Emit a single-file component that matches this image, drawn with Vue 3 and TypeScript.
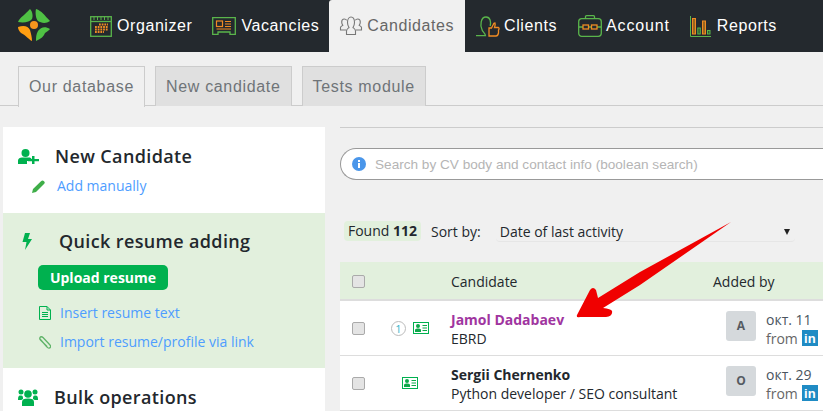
<script setup lang="ts">
interface Candidate {
  name: string
  role: string
  initial: string
  date: string
  visited: boolean
  badge: string
}
const candidates: Candidate[] = [
  { name: 'Jamol Dadabaev', role: 'EBRD', initial: 'A', date: 'окт. 11', visited: true, badge: '1' },
  { name: 'Sergii Chernenko', role: 'Python developer / SEO consultant', initial: 'O', date: 'окт. 29', visited: false, badge: '' }
]
</script>

<template>
  <div class="page">
    <header class="nav">
      <svg class="logo" viewBox="0 0 32 32" width="32" height="32">
        <circle cx="16" cy="16" r="4" fill="#f7941d" />
        <path d="M0 13C2 8 7 6 12 0 15 3 15 8 14 10 12 13 6 14 0 13Z" fill="#4fc144" />
        <path d="M18 0C24 2 26 6 32 12 28 15 23 14 20 12 18 10 17 4 18 0Z" fill="#4fc144" />
        <path d="M0 18C6 16 10 17 12 21 13 25 14 28 14 32 11 31 8 26 3 24 1 22 0 20 0 18Z" fill="#ff9e12" />
        <path d="M32 20C27 17 23 18 20 22 18 25 18 29 18 32 23 30 26 27 27 24 29 23 31 21 32 20Z" fill="#4fc144" />
      </svg>
      <nav class="nav-items">
        <a class="nav-item organizer">
          <svg viewBox="0 0 22 21" width="22" height="21" fill="none">
            <rect x="0.7" y="0.7" width="20.6" height="19.6" stroke="#5ab54b" stroke-width="1.3" />
            <path d="M1 5.500H21" stroke="#5ab54b" stroke-width="1.3" />
            <path d="M4 1V4M7.500 1V4M11 1V4M14.500 1V4M18 1V4" stroke="#5ab54b" />
            <path d="M9 8.500H18M5 11H18M5 13.500H18M5 16H14" stroke="#ef8b23" stroke-width="1.8" stroke-dasharray="1.800 .9" />
          </svg>
          Organizer
        </a>
        <a class="nav-item vacancies">
          <svg viewBox="0 0 24 19" width="24" height="19" fill="none">
            <path d="M.7.7H23.300V17.300H18V15H6V17.300H.7Z" stroke="#5ab54b" stroke-width="1.3" />
            <rect x="4.500" y="4" width="6" height="5.500" stroke="#ef8b23" stroke-width="1.2" />
            <path d="M13 4.500H19M13 7H19M13 9.500H19M4.500 12H19" stroke="#ef8b23" />
          </svg>
          Vacancies
        </a>
        <a class="nav-item active">
          <svg viewBox="0 0 24 20" width="24" height="20" fill="none" stroke="#777" stroke-width="1.1">
            <path d="M7.500 18.500V15C7.500 13 9.500 12 10 11.500 9 10 8.500 8.500 8.500 6.500 8.500 3 10 1 12 1S15.500 3 15.500 6.500C15.500 8.500 15 10 14 11.500 14.500 12 16.500 13 16.500 15V18.500Z" />
            <path d="M7 14H1.500V11.500C1.500 10.500 3 10 3.800 9.300 3 8.200 2.700 7 2.700 6 2.700 4 4 3 5.300 3 6.300 3 7.200 3.500 7.700 4.300" />
            <path d="M17 14H22.500V11.500C22.500 10.500 21 10 20.200 9.300 21 8.200 21.300 7 21.300 6 21.300 4 20 3 18.700 3 17.700 3 16.800 3.500 16.300 4.300" />
          </svg>
          Candidates
        </a>
        <a class="nav-item clients">
          <svg viewBox="0 0 24 21" width="24" height="21" fill="none">
            <path d="M0 19.700H9.500C9.500 17.500 6 15.500 6 13.500 4 10 4.500 1 10 1 14.500 1 15 6 14.200 10" stroke="#5ab54b" stroke-width="1.3" />
            <path d="M13 12H15.500L17 9C17.500 7.500 18 7 19 7 19.500 8 19 10 18.500 11.500H22.500C23.500 12 23 13.500 22.500 14V17C22 19.500 21.500 20 20 20H13Z" stroke="#ef8b23" stroke-width="1.3" />
          </svg>
          Clients
        </a>
        <a class="nav-item account">
          <svg viewBox="0 0 24 22" width="24" height="22" fill="none" stroke="#5ab54b" stroke-width="1.3">
            <rect x="0.7" y="3.700" width="22.600" height="17.600" rx="3" />
            <path d="M7.500 3.500V1.700C7.500 1 8 .7 8.500 .7H15.500C16 .7 16.500 1 16.500 1.700V3.500" />
            <path d="M1 12H5M10.500 12H13.500M19 12H23" />
            <rect x="5" y="10" width="5.500" height="4" stroke="#ef8b23" />
            <rect x="13.500" y="10" width="5.500" height="4" stroke="#ef8b23" />
          </svg>
          Account
        </a>
        <a class="nav-item reports">
          <svg viewBox="0 0 21 21" width="21" height="21" fill="none">
            <path d="M.5 0V20.500H21" stroke="#5ab54b" />
            <rect x="2.500" y="2.500" width="3" height="15.500" fill="#9a651f" stroke="#ef8b23" />
            <rect x="7.800" y="12" width="2.500" height="6" fill="#2d5a30" stroke="#5ab54b" />
            <rect x="12.500" y="5" width="3" height="13" fill="#9a651f" stroke="#ef8b23" />
            <rect x="17.500" y="14.500" width="2.500" height="3.500" fill="#2d5a30" stroke="#5ab54b" />
          </svg>
          Reports
        </a>
      </nav>
    </header>

    <div class="subtabs">
      <a class="subtab current">Our database</a>
      <a class="subtab">New candidate</a>
      <a class="subtab">Tests module</a>
    </div>

    <main class="main">
      <aside class="side">
        <section class="block new">
          <h2 class="title">
            <svg class="title-icon" viewBox="0 0 21 15" width="21" height="15" fill="#00b14f">
              <circle cx="7.500" cy="4" r="4" />
              <path d="M0 15V11.500C0 9.500 2 8.500 4 8.500H11C12.500 8.500 13 9 13.500 10H11V12H9V15Z" />
              <path d="M14 7H16.500V10H21V12.300H16.500V15.500H14V12.300H10V10H14Z" />
            </svg>
            <span>New Candidate</span>
          </h2>
          <a class="link manual">
            <svg viewBox="0 0 13 13" width="13" height="13" fill="#3fae49"><path d="M0 13 1 9 9 1.200C10 .2 11 .2 12 1.200S13 3 12 4L4 12Z" /></svg>
            Add manually
          </a>
        </section>
        <section class="block quick">
          <h2 class="title">
            <svg class="title-icon bolt" viewBox="0 0 10 17" width="10" height="17" fill="#00b14f"><path d="M3 0H8L6 6H10L3 17 4.500 9H0.500Z" /></svg>
            <span>Quick resume adding</span>
          </h2>
          <button class="upload">Upload resume</button>
          <a class="link resume">
            <svg viewBox="0 0 12 14" width="12" height="14" fill="none" stroke="#00b14f"><path d="M.5.5H8L11.500 4V13.500H.5ZM8 .5V4H11.500M3 6.500H9M3 8.500H9M3 10.500H9" /></svg>
            Insert resume text
          </a>
          <a class="link resume">
            <svg viewBox="0 0 12 13" width="12" height="13" fill="none" stroke="#5fb368" stroke-width="1.300"><path d="M1 3 8 11C9 12.500 11 12.500 11.500 11 12 10 11.500 9.500 11 9L4 1.500C3 .5 1.500 .5 1 1.500S.5 3 1.500 4L8 10.500" /></svg>
            Import resume/profile via link
          </a>
        </section>
        <section class="block bulk">
          <h2 class="title">
            <svg class="title-icon" viewBox="0 0 20 18" width="20" height="18" fill="#00b14f">
              <circle cx="3" cy="4" r="2.500" /><circle cx="17" cy="4" r="2.500" /><circle cx="10" cy="6" r="3.800" />
              <path d="M0 12C0 8 1 7.500 3 7.500 5 7.500 5 9 5 11 4 12 3 12 0 12ZM20 12C20 8 19 7.500 17 7.500 15 7.500 15 9 15 11 16 12 17 12 20 12ZM4 18V14C4 11.500 6 10.500 10 10.500S16 11.500 16 14V18Z" />
            </svg>
            <span>Bulk operations</span>
          </h2>
        </section>
      </aside>

      <section class="content">
        <div class="search">
          <svg viewBox="0 0 14 14" width="14" height="14">
            <circle cx="7" cy="7" r="7" fill="#4a96ea" />
            <rect x="6" y="6" width="2" height="5" fill="#fff" />
            <rect x="6" y="3" width="2" height="2" fill="#fff" />
          </svg>
          <span class="placeholder">Search by CV body and contact info (boolean search)</span>
        </div>
        <div class="filters">
          <span class="found">Found <b>112</b></span>
          <span class="sort-label">Sort by:</span>
          <div class="select">
            <span>Date of last activity</span>
            <i class="caret"></i>
          </div>
        </div>
        <div class="table">
          <div class="row head">
            <span class="cell-check"><i class="check"></i></span>
            <span class="cell-icons"></span>
            <span class="cell-main">Candidate</span>
            <span class="cell-added">Added by</span>
          </div>
          <div v-for="c in candidates" :key="c.name" class="row item">
            <span class="cell-check"><i class="check"></i></span>
            <span class="cell-icons">
              <i v-if="c.badge" class="count">{{ c.badge }}</i>
              <svg viewBox="0 0 16 12" width="16" height="12" fill="none">
                <rect x=".5" y=".5" width="15" height="11" stroke="#00b14f" />
                <circle cx="5" cy="4" r="2" fill="#0ea84a" />
                <path d="M2 10V8C2 7 3.500 6.500 5 6.500S8 7 8 8V10Z" fill="#0ea84a" />
                <path d="M9.500 3.500H14M9.500 6H14M9.500 8.500H14" stroke="#0ea84a" />
              </svg>
            </span>
            <span class="cell-main">
              <a class="name" :class="{ visited: c.visited }">{{ c.name }}</a>
              <span class="role">{{ c.role }}</span>
            </span>
            <span class="cell-added">
              <i class="avatar">{{ c.initial }}</i>
              <span class="meta">
                <span class="date">{{ c.date }}</span>
                <span class="from">from <i class="in">in</i></span>
              </span>
            </span>
          </div>
        </div>
      </section>
    </main>

    <svg class="arrow" viewBox="0 0 823 411" width="823" height="411">
      <path d="M731 222 L640 272 L598 298 L596 290 Q593 286 590 290 L577 315 Q576 318 580 317 L606 317 Q613 316 612 311 Q611 309 603 308 L640 285 Z" fill="#f00000" />
    </svg>
  </div>
</template>

<style>
html, body { margin: 0; overflow: hidden; background: #f0f0f0; }
</style>

<style scoped>
.page {
  position: relative;
  width: 823px;
  height: 411px;
  overflow: hidden;
  background: #f0f0f0;
  font-family: "Open Sans", sans-serif;
  color: #23282d;
}
a { text-decoration: none; }
i { font-style: normal; }
.nav {
  display: flex;
  height: 52px;
  background: #24292e;
}
.logo { margin: 9px 0 0 18px; flex: none; }
.nav-items { display: flex; margin-left: 30px; }
.nav-item {
  display: flex;
  align-items: center;
  gap: 5px;
  height: 52px;
  color: #fff;
  font: 16px "Liberation Sans", sans-serif;
  letter-spacing: 0.58px;
  padding: 0 10px;
  box-sizing: border-box;
}
.active {
  background: #f0f0f0;
  color: #666;
  gap: 4px;
  padding: 0 11px 0 10px;
  border-radius: 3px 0 0 0;
}
.clients { padding-left: 11px; gap: 4px; }
.account { padding-left: 11px; gap: 4px; letter-spacing: 0.85px; }
.reports { gap: 6px; }
.subtabs {
  display: flex;
  gap: 10px;
  height: 54px;
  box-sizing: border-box;
  padding: 14px 0 0 18px;
  border-bottom: 1px solid #ccc;
}
.subtab {
  height: 40px;
  box-sizing: border-box;
  padding: 0 10px;
  font: 16px/40px "Liberation Sans", sans-serif;
  letter-spacing: 0.67px;
  color: #6f7478;
  background: #e0e0e0;
  border: 1px solid #ccc;
  border-bottom: 0;
}
.current {
  height: 41px;
  background: #f0f0f0;
}
.main {
  display: flex;
  padding: 21px 0 0 3px;
}
.side { width: 322px; flex: none; }
.block { background: #fff; }
.new { height: 86px; padding: 18px 0 0 15px; box-sizing: border-box; }
.quick { height: 155px; background: #e2f0dd; padding: 17px 0 0 19px; box-sizing: border-box; }
.bulk { height: 60px; padding: 18px 0 0 15px; box-sizing: border-box; }
.title {
  display: flex;
  align-items: center;
  margin: 0;
  height: 22px;
  font: 600 18px/22px "Open Sans", sans-serif;
  letter-spacing: 0.37px;
  color: #23282d;
}
.title svg { flex: none; }
.new .title span { margin-left: 16px; }
.quick .title span { margin-left: 27px; }
.bulk .title span { margin-left: 16px; }
.link {
  display: flex;
  align-items: center;
  font-size: 14px;
  line-height: 20px;
  color: #4e9dff;
}
.manual { gap: 12px; margin: 9px 0 0 14px; }
.upload {
  display: block;
  width: 130px;
  height: 25px;
  margin: 13px 0 0 16px;
  padding: 0;
  border: 0;
  border-radius: 5px;
  background: #00b14f;
  color: #fff;
  font: 700 14px "Open Sans", sans-serif;
}
.resume { gap: 9px; margin: 13px 0 0 17px; }
.resume + .resume { margin-top: 9px; }
.content { flex: 1; margin-left: 15px; border-top: 1px solid #ccc; min-width: 0; }
.search {
  display: flex;
  align-items: center;
  gap: 9px;
  margin-top: 20px;
  padding-left: 11px;
  background: #fff;
  border: 1px solid #999;
  border-right: 0;
  border-radius: 16px 0 0 16px;
  height: 30px;
}
.placeholder { font: 13.6px "Liberation Sans", sans-serif; color: #b5b5b5; }
.filters {
  display: flex;
  align-items: center;
  height: 22px;
  margin: 40px 0 0 4px;
  font-size: 14px;
}
.found {
  width: 77px;
  height: 20px;
  line-height: 20px;
  text-align: center;
  background: #e2f0dd;
  border-radius: 4px;
  color: #23282d;
}
.sort-label { margin-left: 10px; }
.select {
  display: flex;
  align-items: center;
  justify-content: space-between;
  width: 299px;
  box-sizing: border-box;
  height: 22px;
  margin-left: 15px;
  padding: 2px 5px 0 4px;
  border-bottom: 1px solid #e6e6e6;
  border-radius: 0 0 4px 4px;
}
.caret {
  width: 0;
  height: 0;
  border: 3px solid transparent;
  border-top: 6px solid #222;
  border-bottom: 0;
}
.table { margin-top: 20px; }
.row { display: flex; align-items: center; }
.head {
  height: 39px;
  background: #e2f0dd;
  border-bottom: 2px solid #ddd;
  box-sizing: border-box;
  font-size: 14px;
  padding-top: 1px;
}
.item {
  height: 55px;
  background: #fff;
  border-bottom: 1px solid #ddd;
  box-sizing: border-box;
  font-size: 14px;
}
.cell-check { width: 36px; padding-left: 12px; box-sizing: border-box; display: flex; }
.check {
  width: 13px;
  height: 13px;
  box-sizing: border-box;
  background: #e4e4e4;
  border: 1px solid #aaa;
  border-radius: 2px;
}
.cell-icons { width: 68px; margin-right: 7px; display: flex; align-items: center; justify-content: center; gap: 7px; flex: none; }
.count {
  width: 13px;
  height: 13px;
  border: 1px solid #bbb;
  border-radius: 50%;
  font-size: 11px;
  line-height: 13px;
  text-align: center;
  color: #33b5c9;
}
.cell-main { width: 262px; flex: none; display: flex; flex-direction: column; }
.item .cell-main { padding-top: 1px; }
.name { font-weight: 700; color: #23282d; line-height: 19px; }
.visited { color: #a035a0; }
.role { line-height: 19px; }
.cell-added { display: flex; align-items: center; gap: 10px; flex: none; }
.head .cell-added { display: block; }
.item .cell-added { margin-left: 13px; }
.avatar {
  width: 30px;
  height: 30px;
  line-height: 30px;
  text-align: center;
  background: #d5d9dc;
  border-radius: 3px;
  font-weight: 700;
  font-size: 12px;
  color: #555b62;
  margin-top: -4px;
}
.meta { display: flex; flex-direction: column; font-size: 14px; line-height: 19px; margin-top: 1px; }
.date { color: #4a5560; }
.from { color: #666; white-space: nowrap; display: flex; align-items: center; gap: 4px; }
.in {
  width: 16px;
  height: 16px;
  background: #1f8bc4;
  color: #fff;
  font: 700 13px/17px "Liberation Sans", sans-serif;
  text-align: center;
}
.arrow { position: absolute; left: 0; top: 0; pointer-events: none; }
</style>
